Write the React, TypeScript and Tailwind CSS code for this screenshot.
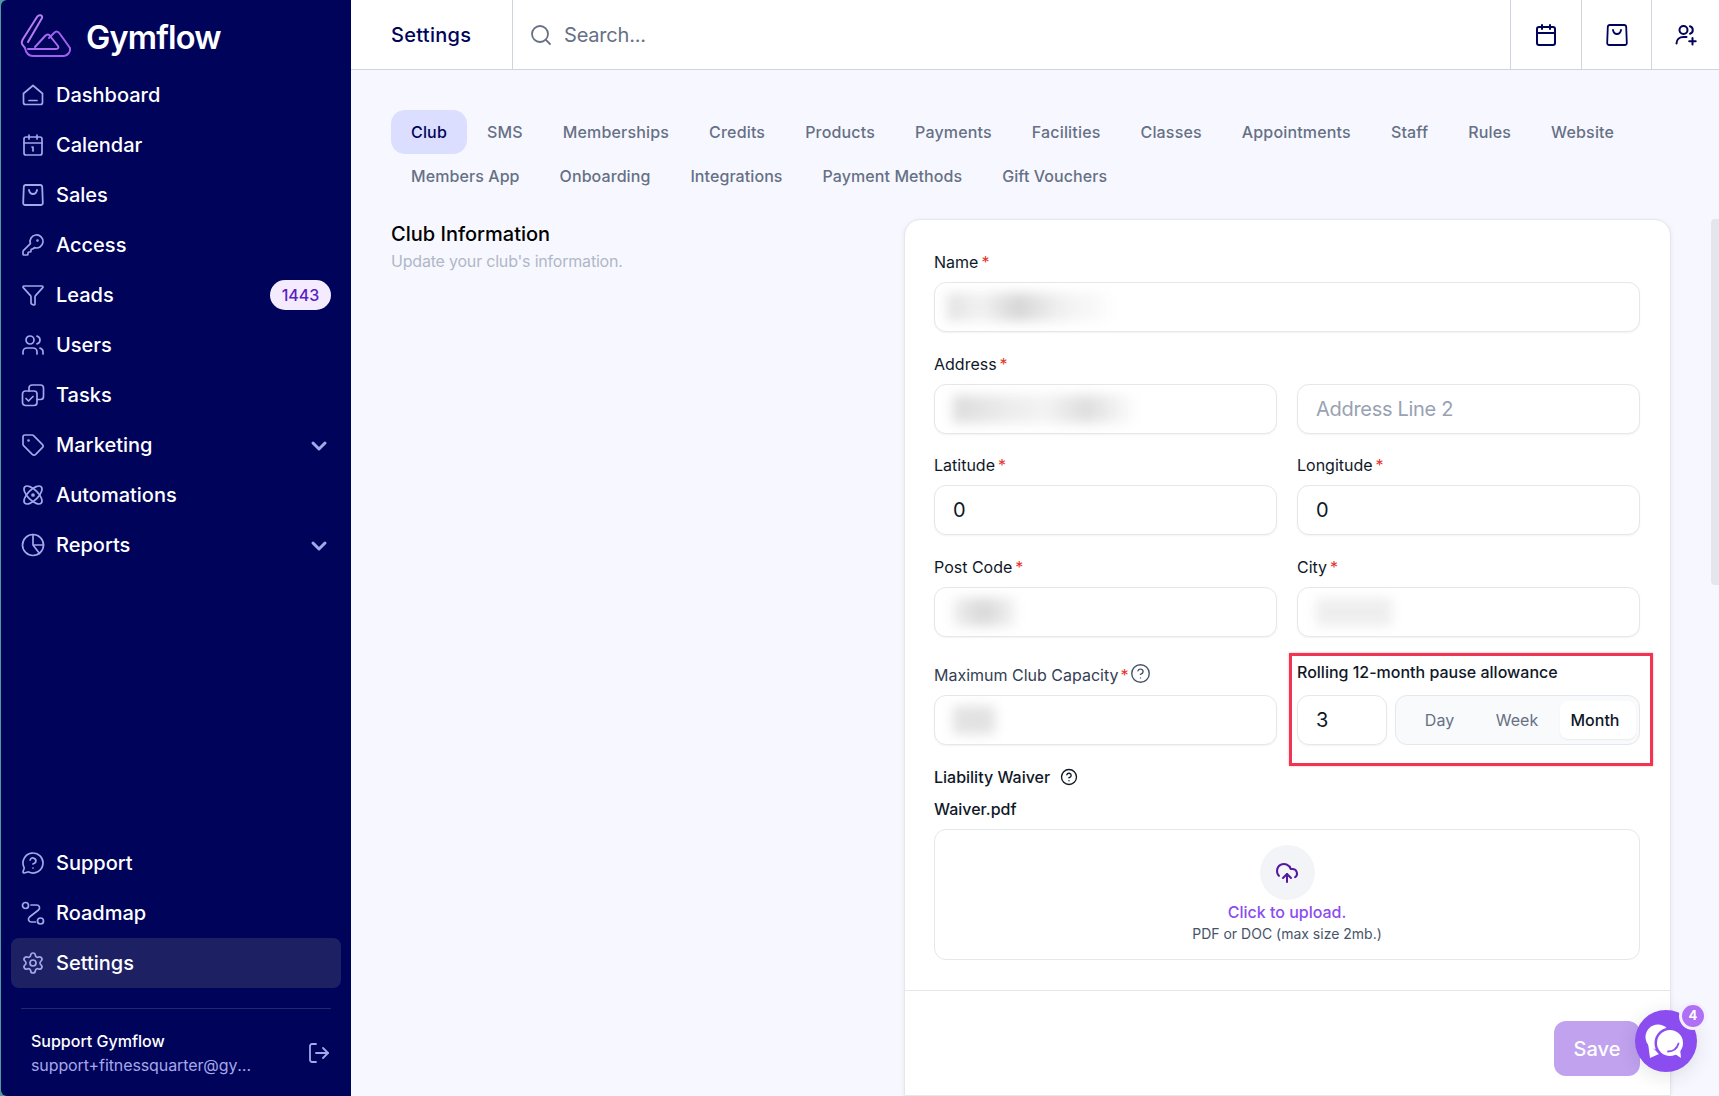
import React from "react";
import {
  Atom,
  Calendar,
  Calendar1,
  ChevronDown,
  CircleHelp,
  CloudUpload,
  Funnel,
  KeyRound,
  LogOut,
  MessageCircleQuestion,
  Search,
  Settings,
  Tag,
  Users,
} from "lucide-react";

const font = { fontFamily: "Inter, 'Liberation Sans', sans-serif" };

function HomeIcon({ className }: { className?: string }) {
  return (
    <svg viewBox="0 0 24 24" fill="none" stroke="currentColor" strokeWidth="1.7" strokeLinejoin="round" strokeLinecap="round" className={className}>
      <path d="M2.5 10.5 12 2.5l9.5 8v9a2 2 0 0 1-2 2h-15a2 2 0 0 1-2-2z" />
      <path d="M8 17.5h8" />
    </svg>
  );
}

function BagIcon({ className }: { className?: string }) {
  return (
    <svg viewBox="0 0 24 24" fill="none" stroke="currentColor" strokeWidth="1.8" strokeLinejoin="round" strokeLinecap="round" className={className}>
      <path d="M4.8 2h14.4a2 2 0 0 1 2 1.8l.6 16a2 2 0 0 1-2 2.2H4.200a2 2 0 0 1-2-2.200l.6-16a2 2 0 0 1 2-1.800z" />
      <path d="M8 7c.5 2.800 2 4 4 4s3.500-1.200 4-4" />
    </svg>
  );
}

function TasksIcon({ className }: { className?: string }) {
  return (
    <svg viewBox="0 0 24 24" fill="none" stroke="currentColor" strokeWidth="1.7" strokeLinejoin="round" strokeLinecap="round" className={className}>
      <rect x="1.5" y="8" width="14.500" height="14.500" rx="3" />
      <path d="M5 15.500l2.500 2.500 4.500-4.500" />
      <path d="M8 8V5a3 3 0 0 1 3-3h8.500a3 3 0 0 1 3 3v8.500a3 3 0 0 1-3 3H16" />
    </svg>
  );
}

function PieIcon({ className }: { className?: string }) {
  return (
    <svg viewBox="0 0 24 24" fill="none" stroke="currentColor" strokeWidth="1.7" strokeLinejoin="round" strokeLinecap="round" className={className}>
      <circle cx="12" cy="12" r="10.500" />
      <path d="M12 1.500V12h10.500M12 12l6.500 8.500" />
    </svg>
  );
}

function RoadmapIcon({ className }: { className?: string }) {
  return (
    <svg viewBox="0 0 24 24" fill="none" stroke="currentColor" strokeWidth="1.7" strokeLinejoin="round" strokeLinecap="round" className={className}>
      <circle cx="4.500" cy="4.500" r="3" />
      <circle cx="19.500" cy="20" r="3" />
      <path d="M10 4h5.500c3 0 4 3 2 5l-9 7c-2 2-1 5 2 5h4" />
    </svg>
  );
}

function UserAddIcon({ className }: { className?: string }) {
  return (
    <svg viewBox="0 0 24 24" fill="none" stroke="currentColor" strokeWidth="2" strokeLinejoin="round" strokeLinecap="round" className={className}>
      <circle cx="9.500" cy="7" r="4" />
      <path d="M16 3.200a4 4 0 0 1 0 7.600" />
      <path d="M2.500 20.500c0-4 3-6.500 7-6.500h3" />
      <path d="M18.500 15v6.500M15.200 18.200h6.500" />
    </svg>
  );
}

function Logo() {
  return (
    <svg viewBox="0 0 64 54" fill="none" strokeWidth="2" strokeLinejoin="round" strokeLinecap="round" className="w-16 h-[54px] shrink-0">
      <path d="M10 40 7 36c-1-2 0-3 1-5L22 9c2-3 6-2 5 1L13 34" stroke="#b67cf2" />
      <path d="M10 40c1 5 3 8 8 8h31c3 0 7-4 6-8L45 26c-2-3-4-3-6-1l-5 5" stroke="#a35ff0" />
      <path d="M13 41h28c2 0 3-1 2-3l-8-10c-1-2-3-2-5 0L20 39" stroke="#a96af2" />
    </svg>
  );
}

function ChatIcon() {
  return (
    <svg viewBox="0 0 62 62" className="w-[62px] h-[62px]">
      <circle cx="23" cy="27" r="12.500" fill="#fff" />
      <path d="M13 33 15 48l9-4z" fill="#fff" />
      <circle cx="35" cy="33" r="15.500" fill="#8b4cf0" />
      <circle cx="35" cy="33" r="13" fill="#fff" />
      <path d="M40 44l6 4-1-10z" fill="#fff" />
      <path d="M33 41.500c5 0 9-3 10.500-8" fill="none" stroke="#8b4cf0" strokeWidth="1.800" strokeLinecap="round" />
    </svg>
  );
}

const iconClass = "w-6 h-6 shrink-0 text-[#a4a7e8]";
const strokeW = 1.7;

function NavItem({
  icon,
  label,
  badge,
  arrow,
  active,
}: {
  icon: React.ReactNode;
  label: string;
  badge?: string;
  arrow?: boolean;
  active?: boolean;
}) {
  return (
    <div className={`h-[50px] mx-[10px] px-[10px] flex items-center gap-[11px] rounded-lg ${active ? "bg-[#1d2163]" : ""}`}>
      {icon}
      <span className="text-white text-[20px] font-medium flex-1">{label}</span>
      {badge && (
        <span className="w-[61px] h-[30px] rounded-full bg-[#f4ebff] text-[#5a1fc0] text-[16px] font-medium flex items-center justify-center">
          {badge}
        </span>
      )}
      {arrow && <ChevronDown className="w-6 h-6 mt-[2px] text-[#a4a7e8]" strokeWidth={3} />}
    </div>
  );
}

function Sidebar() {
  return (
    <aside className="w-[350px] ml-px shrink-0 h-full bg-[#00035a] rounded-l-md flex flex-col justify-between">
      <div>
        <div className="h-[70px] pl-[14px] flex items-center gap-[7px]">
          <Logo />
          <span className="text-white text-[32.5px] font-semibold tracking-tight pt-[6px]">Gymflow</span>
        </div>
        <NavItem icon={<HomeIcon className={iconClass} />} label="Dashboard" />
        <NavItem icon={<Calendar1 className={iconClass} strokeWidth={strokeW} />} label="Calendar" />
        <NavItem icon={<BagIcon className={iconClass} />} label="Sales" />
        <NavItem icon={<KeyRound className={iconClass} strokeWidth={strokeW} />} label="Access" />
        <NavItem icon={<Funnel className={iconClass} strokeWidth={strokeW} />} label="Leads" badge="1443" />
        <NavItem icon={<Users className={iconClass} strokeWidth={strokeW} />} label="Users" />
        <NavItem icon={<TasksIcon className={iconClass} />} label="Tasks" />
        <NavItem icon={<Tag className={iconClass} strokeWidth={strokeW} />} label="Marketing" arrow />
        <NavItem icon={<Atom className={iconClass} strokeWidth={strokeW} />} label="Automations" />
        <NavItem icon={<PieIcon className={iconClass} />} label="Reports" arrow />
      </div>
      <div>
        <NavItem icon={<MessageCircleQuestion className={iconClass} strokeWidth={strokeW} />} label="Support" />
        <NavItem icon={<RoadmapIcon className={iconClass} />} label="Roadmap" />
        <NavItem icon={<Settings className={iconClass} strokeWidth={strokeW} />} label="Settings" active />
        <div className="mt-5 mx-5 h-px bg-[#23276b]" />
        <div className="h-[87px] pl-[30px] pr-5 flex items-center justify-between">
          <div className="w-[222px]">
            <div className="text-white text-[16px] font-medium leading-6">Support Gymflow</div>
            <div className="text-[#a4a7e8] text-[16px] leading-6 tracking-[-0.1px] truncate">support+fitnessquarter@gymflow.io</div>
          </div>
          <LogOut className="w-6 h-6 text-[#a4a7e8]" strokeWidth={1.8} />
        </div>
      </div>
    </aside>
  );
}

function Header() {
  return (
    <header className="h-[70px] shrink-0 bg-white border-b border-[#d0d5dd] flex items-center">
      <div className="w-[162px] h-full pl-10 flex items-center border-r border-[#d0d5dd] text-[#00035a] text-[20px] font-medium tracking-[0.3px]">
        Settings
      </div>
      <div className="flex-1 flex items-center gap-[11px] pl-[16px]">
        <Search className="w-6 h-6 text-[#667085]" strokeWidth={1.8} />
        <span className="text-[20px] text-[#667085] tracking-[-0.2px]">Search...</span>
      </div>
      <div className="w-[71px] h-full flex items-center justify-center border-l border-[#d0d5dd]">
        <Calendar className="w-6 h-6 text-[#00035a]" strokeWidth={2} />
      </div>
      <div className="w-[70px] h-full flex items-center justify-center border-l border-[#d0d5dd]">
        <BagIcon className="w-6 h-6 text-[#00035a]" />
      </div>
      <div className="w-[68px] h-full flex items-center justify-center border-l border-[#d0d5dd]">
        <UserAddIcon className="w-6 h-6 text-[#00035a]" />
      </div>
    </header>
  );
}

const tabs = ["Club", "SMS", "Memberships", "Credits", "Products", "Payments", "Facilities", "Classes", "Appointments", "Staff", "Rules", "Website"];
const tabs2 = ["Members App", "Onboarding", "Integrations", "Payment Methods", "Gift Vouchers"];

function Tab({ label, active }: { label: string; active?: boolean }) {
  return (
    <div className={`h-11 px-5 flex items-center rounded-[14px] text-[16px] font-medium ${active ? "bg-[#dcdeff] text-[#00035a]" : "text-[#667085]"}`}>
      {label}
    </div>
  );
}

function Label({ text, required }: { text: string; required?: boolean }) {
  return (
    <div className="h-6 mb-2 flex items-center text-[16px] text-[#101828] leading-6">
      {text}
      {required && <span className="text-[#e5332a] ml-[3px]">*</span>}
    </div>
  );
}

function Blur({ className }: { className: string }) {
  return <div className={`blur-[6px] ${className}`} />;
}

function Input({ children, className = "" }: { children?: React.ReactNode; className?: string }) {
  return (
    <div className={`h-[50px] rounded-xl border border-[#e4e7ec] bg-white shadow-[0_1px_2px_rgba(16,24,40,0.05)] px-[18px] flex items-center text-[20px] text-[#101828] ${className}`}>
      {children}
    </div>
  );
}

function ClubForm() {
  return (
    <div className="relative flex-1 mr-[48px] bg-white border border-[#e4e7ec] rounded-t-2xl pt-[30px] shadow-[0_1px_4px_rgba(16,24,40,0.08)]">
      <div className="pl-[29px] pr-[30px]">
        <Label text="Name" required />
        <Input className="mb-5 !px-3">
          <Blur className="w-[170px] h-7 bg-[linear-gradient(90deg,#e2e2e2,#f2f2f2_20%,#d6d6d6_42%,#efefef_65%,transparent)]" />
        </Input>

        <Label text="Address" required />
        <div className="grid grid-cols-2 gap-x-5 mb-[19px]">
          <Input>
            <Blur className="w-[185px] h-7 bg-[linear-gradient(90deg,#dcdcdc,#ececec_30%,#f3f3f3_50%,#dedede_72%,transparent)]" />
          </Input>
          <Input>
            <span className="text-[#98a2b3] tracking-[-0.3px]">Address Line 2</span>
          </Input>
        </div>

        <div className="grid grid-cols-2 gap-x-5 mb-5">
          <div>
            <Label text="Latitude" required />
            <Input>0</Input>
          </div>
          <div>
            <Label text="Longitude" required />
            <Input>0</Input>
          </div>
        </div>

        <div className="grid grid-cols-2 gap-x-5 mb-[26px]">
          <div>
            <Label text="Post Code" required />
            <Input>
              <Blur className="w-[62px] h-7 bg-[linear-gradient(90deg,#efefef,#d8d8d8_50%,#f2f2f2)]" />
            </Input>
          </div>
          <div>
            <Label text="City" required />
            <Input>
              <Blur className="w-[76px] h-7 bg-[#eeeeee]" />
            </Input>
          </div>
        </div>

        <div className="grid grid-cols-2 gap-x-5 mb-5">
          <div>
            <div className="h-6 mb-2 flex items-center text-[16px] text-[#344054]">
              Maximum Club Capacity<span className="text-[#e5332a] ml-[2px]">*</span>
              <CircleHelp className="w-[21px] h-[21px] ml-[1px] -mt-1 text-[#475467]" strokeWidth={1.6} />
            </div>
            <Input>
              <Blur className="w-[42px] h-7 bg-[#e2e2e2]" />
            </Input>
          </div>
          <div>
            <div className="h-6 mb-[11px] -mt-[3px] flex items-center text-[16px] font-medium text-[#101828]">
              Rolling 12-month pause allowance
            </div>
            <div className="flex gap-2">
              <Input className="w-[90px] shrink-0">3</Input>
              <div className="flex-1 h-[50px] rounded-xl border border-[#e4e7ec] bg-[#f9fafb] flex items-center pr-[3px] text-[16px]">
                <span className="w-[87px] text-center text-[#667085]">Day</span>
                <span className="w-[68px] text-center text-[#667085]">Week</span>
                <span className="ml-auto w-[76px] h-[38px] pr-[6px] flex items-center justify-center rounded-lg bg-white text-[#101828] font-medium shadow-[0_1px_2px_rgba(16,24,40,0.06)]">
                  Month
                </span>
              </div>
            </div>
          </div>
        </div>

        <div className="h-6 mb-2 flex items-center gap-[10px] text-[16px] font-medium text-[#101828]">
          Liability Waiver
          <CircleHelp className="w-[18px] h-[18px] text-[#101828]" strokeWidth={1.8} />
        </div>
        <div className="h-6 mb-2 text-[16px] font-medium text-[#101828] leading-6">Waiver.pdf</div>

        <div className="h-[131px] rounded-xl border border-[#e4e7ec] flex flex-col items-center pt-[15px]">
          <div className="w-[55px] h-[55px] rounded-full bg-[#f2f4f7] flex items-center justify-center">
            <CloudUpload className="w-6 h-6 text-[#53189d]" strokeWidth={2} />
          </div>
          <div className="text-[16px] font-medium text-[#8b4cf0] leading-6">Click to upload.</div>
          <div className="text-[14px] text-[#475467] leading-5">PDF or DOC (max size 2mb.)</div>
        </div>
      </div>

      <div className="mt-[30px] h-px bg-[#e4e7ec]" />
      <div className="pr-[30px] mt-[30px] flex justify-end">
        <div className="w-[86px] h-[55px] rounded-xl bg-[#c1a2ef] text-white text-[20px] font-medium flex items-center justify-center">
          Save
        </div>
      </div>
    </div>
  );
}

export default function App() {
  return (
    <div className="w-[1719px] h-[1096px] flex overflow-hidden bg-[#4f9a9c] relative" style={font}>
      <Sidebar />
      <main className="flex-1 flex flex-col min-w-0 bg-[#f7f8ff]">
        <Header />
        <div className="flex-1 min-h-0 flex flex-col pl-10 pt-10">
          <div className="flex flex-wrap tracking-[0.17px]">
            {tabs.map((t, i) => (
              <Tab key={t} label={t} active={i === 0} />
            ))}
          </div>
          <div className="flex tracking-[0.08px]">
            {tabs2.map((t) => (
              <Tab key={t} label={t} />
            ))}
          </div>
          <div className="flex mt-[21px] flex-1 min-h-0">
            <div className="w-[513px] shrink-0 pt-[1px]">
              <div className="text-[20px] font-medium text-black leading-7">Club Information</div>
              <div className="text-[16px] text-[#b0b7c6] leading-6 mt-[1px] tracking-[-0.2px]">Update your club's information.</div>
            </div>
            <ClubForm />
          </div>
        </div>
      </main>

      {/* highlight round the pause allowance field */}
      <div className="absolute left-[1289px] top-[653px] w-[364px] h-[113px] border-[3px] border-[#ef3550] shadow-[0_0_2px_rgba(239,53,80,0.4)]" />

      {/* scrollbar thumb */}
      <div className="absolute left-[1711px] top-[219px] w-2 h-[366px] rounded-l bg-[#e4e6ec]" />

      {/* chat launcher */}
      <div className="absolute left-[1635px] top-[1010px] w-[62px] h-[62px] rounded-full bg-[#8b4cf0] shadow-[0_4px_20px_rgba(16,24,40,0.12)]">
        <ChatIcon />
      </div>
      <div className="absolute left-[1679px] top-[1002px] w-[28px] h-[28px] rounded-full bg-[#b070f5] border-[3px] border-[#f3f1fb] text-white text-[13px] font-bold flex items-center justify-center">
        4
      </div>
    </div>
  );
}
